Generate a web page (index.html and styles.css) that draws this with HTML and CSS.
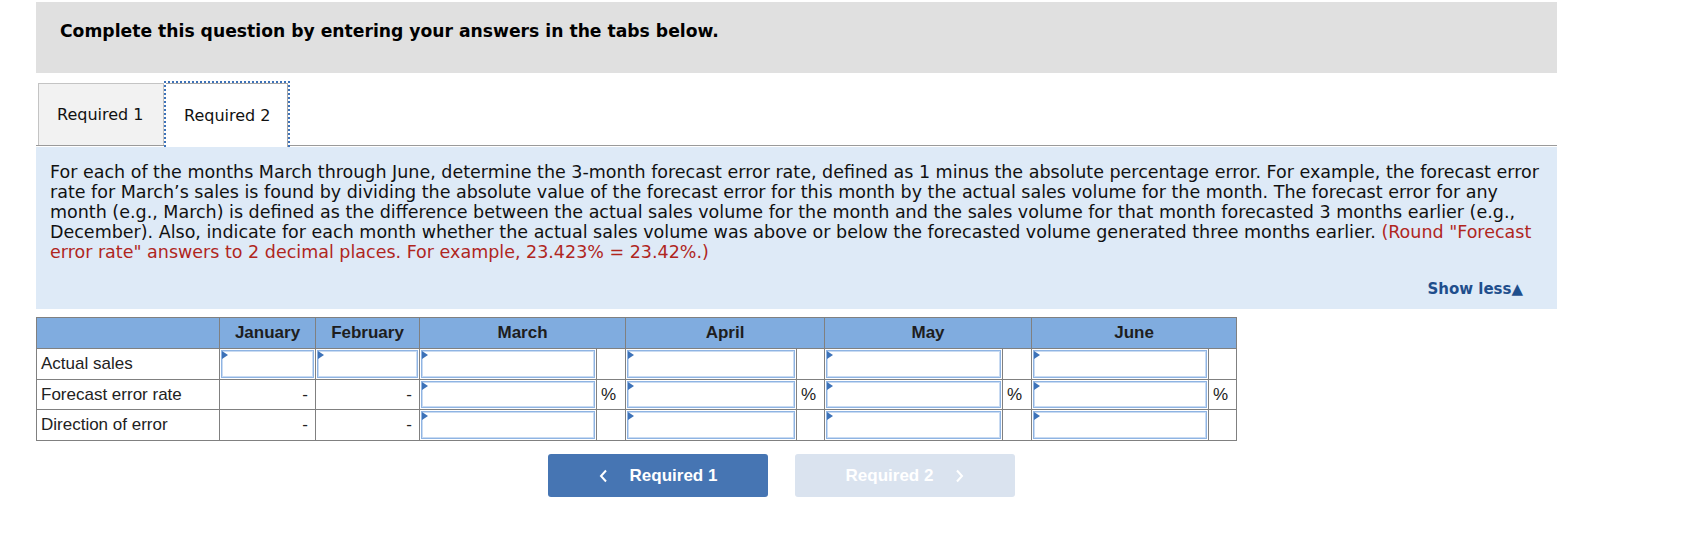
FILE: index.html
```html
<!DOCTYPE html>
<html>
<head>
<meta charset="utf-8">
<link rel="stylesheet" href="styles.css">
</head>
<body>
<div class="page">
  <div class="banner"><h2 class="banner-title">Complete this question by entering your answers in the tabs below.</h2></div>
  <div class="tabbar">
    <div class="tab">Required 1</div>
    <div class="tab tab-active">Required 2</div>
  </div>
  <div class="prompt">
    <p class="prompt-text">For each of the months March through June, determine the 3-month forecast error rate, defined as 1 minus the absolute percentage error. For example, the forecast error rate for March’s sales is found by dividing the absolute value of the forecast error for this month by the actual sales volume for the month. The forecast error for any month (e.g., March) is defined as the difference between the actual sales volume for the month and the sales volume for that month forecasted 3 months earlier (e.g., December). Also, indicate for each month whether the actual sales volume was above or below the forecasted volume generated three months earlier. <span class="hint">(Round "Forecast error rate" answers to 2 decimal places. For example, 23.423% = 23.42%.)</span></p>
    <div class="show-less">Show less▲</div>
  </div>
  <table class="grid">
    <colgroup>
      <col style="width:183px"><col style="width:96px"><col style="width:104px">
      <col style="width:177px"><col style="width:29px">
      <col style="width:171px"><col style="width:28px">
      <col style="width:178px"><col style="width:29px">
      <col style="width:177px"><col style="width:28px">
    </colgroup>
    <thead>
      <tr class="head">
        <th></th><th>January</th><th>February</th>
        <th colspan="2">March</th><th colspan="2">April</th><th colspan="2">May</th><th colspan="2">June</th>
      </tr>
    </thead>
    <tbody>
      <tr class="r1">
        <td class="label">Actual sales</td>
        <td class="inp"><div class="box"></div></td>
        <td class="inp"><div class="box"></div></td>
        <td class="inp"><div class="box"></div></td><td class="pct"></td>
        <td class="inp"><div class="box"></div></td><td class="pct"></td>
        <td class="inp"><div class="box"></div></td><td class="pct"></td>
        <td class="inp"><div class="box"></div></td><td class="pct"></td>
      </tr>
      <tr class="r2">
        <td class="label">Forecast error rate</td>
        <td class="dash">-</td>
        <td class="dash">-</td>
        <td class="inp"><div class="box"></div></td><td class="pct">%</td>
        <td class="inp"><div class="box"></div></td><td class="pct">%</td>
        <td class="inp"><div class="box"></div></td><td class="pct">%</td>
        <td class="inp"><div class="box"></div></td><td class="pct">%</td>
      </tr>
      <tr class="r3">
        <td class="label">Direction of error</td>
        <td class="dash">-</td>
        <td class="dash">-</td>
        <td class="inp"><div class="box"></div></td><td class="pct"></td>
        <td class="inp"><div class="box"></div></td><td class="pct"></td>
        <td class="inp"><div class="box"></div></td><td class="pct"></td>
        <td class="inp"><div class="box"></div></td><td class="pct"></td>
      </tr>
    </tbody>
  </table>
  <div class="nav">
    <div class="btn btn-prev">
      <svg class="chev" width="9" height="14" viewBox="0 0 9 14"><polyline points="7,1.5 2,7 7,12.5" fill="none" stroke="#fff" stroke-width="2"/></svg>
      <span>Required 1</span>
    </div>
    <div class="btn btn-next">
      <span>Required 2</span>
      <svg class="chev" width="9" height="14" viewBox="0 0 9 14"><polyline points="2,1.5 7,7 2,12.5" fill="none" stroke="#fff" stroke-width="2"/></svg>
    </div>
  </div>
</div>
</body>
</html>
```

FILE: styles.css
```css
html, body {
  margin: 0;
  padding: 0;
  background: #fff;
}
.page {
  padding: 2px 0 0 36px;
  width: 1521px;
  font-family: "DejaVu Sans", Verdana, sans-serif;
  color: #111;
}
.banner {
  background: #e0e0e0;
  height: 71px;
  padding-left: 24px;
  box-sizing: border-box;
}
.banner-title {
  margin: 0;
  padding-top: 19px;
  font-size: 17.2px;
  line-height: 20px;
  font-weight: bold;
  color: #000;
}
.tabbar {
  display: flex;
  align-items: flex-start;
  margin-top: 8px;
  margin-bottom: 1px;
  padding-left: 2px;
  border-bottom: 1px solid #9a9a9a;
  height: 64px;
}
.tab {
  width: 126px;
  height: 62px;
  margin-top: 2px;
  box-sizing: border-box;
  background: #f2f2f2;
  border: 1px solid #c4c4c4;
  border-bottom: none;
  font-size: 16px;
  line-height: 62px;
  padding-left: 18px;
  color: #111;
}
.tab-active {
  background: #fff;
  width: 126px;
  height: 66px;
  margin-top: 0;
  border: 2px dotted #3d72b8;
  border-bottom: none;
  box-shadow: inset 0 1px 0 #a8a8a8, inset -1px 0 0 #a8a8a8;
  line-height: 66px;
  padding-left: 18px;
  position: relative;
  z-index: 1;
}
.prompt {
  background: #deeaf7;
  padding: 15px 14px 10px 14px;
  height: 162px;
  box-sizing: border-box;
  position: relative;
  z-index: 2;
}
.prompt-text {
  margin: 0;
  font-size: 17.5px;
  line-height: 20px;
  color: #111;
}
.hint {
  color: #b0261e;
}
.show-less {
  margin-top: 17px;
  text-align: right;
  padding-right: 20px;
  font-size: 15px;
  line-height: 20px;
  font-weight: bold;
  color: #1f4e8c;
}
.grid {
  margin-top: 8px;
  border-collapse: collapse;
  table-layout: fixed;
  width: 1200px;
  font-family: "Liberation Sans", Arial, sans-serif;
  font-size: 17px;
  color: #222;
}
.grid th, .grid td {
  border: 1px solid #808080;
  padding: 0;
}
.head th {
  background: #80acdf;
  height: 30px;
  font-weight: bold;
  text-align: center;
  color: #1e1e1e;
}
.label {
  padding-left: 4px !important;
  color: #222;
}
.dash {
  text-align: right;
  padding-right: 7px !important;
}
.pct {
  padding-left: 4px !important;
}
.inp {
  padding: 1px !important;
}
.box {
  height: 26px;
  border: 1px solid #8fb4e3;
  box-shadow: inset 0 0 0 1px #c9dbf2;
  background: #fff;
  position: relative;
}
.r2 .box {
  height: 25px;
}
.box::before {
  content: "";
  position: absolute;
  left: 0;
  top: 0;
  border-left: 6px solid #3d72b8;
  border-top: 4px solid transparent;
  border-bottom: 4px solid transparent;
}
.nav {
  display: flex;
  gap: 27px;
  padding-left: 512px;
  margin-top: 13px;
}
.btn {
  width: 220px;
  height: 43px;
  border-radius: 3px;
  display: flex;
  align-items: center;
  justify-content: center;
  gap: 22px;
  font-family: "Liberation Sans", Arial, sans-serif;
  font-size: 17px;
  font-weight: bold;
  color: #fff;
}
.btn-prev {
  background: #4675b3;
}
.btn-next {
  background: #dae3ef;
}
.chev {
  display: block;
}
```
